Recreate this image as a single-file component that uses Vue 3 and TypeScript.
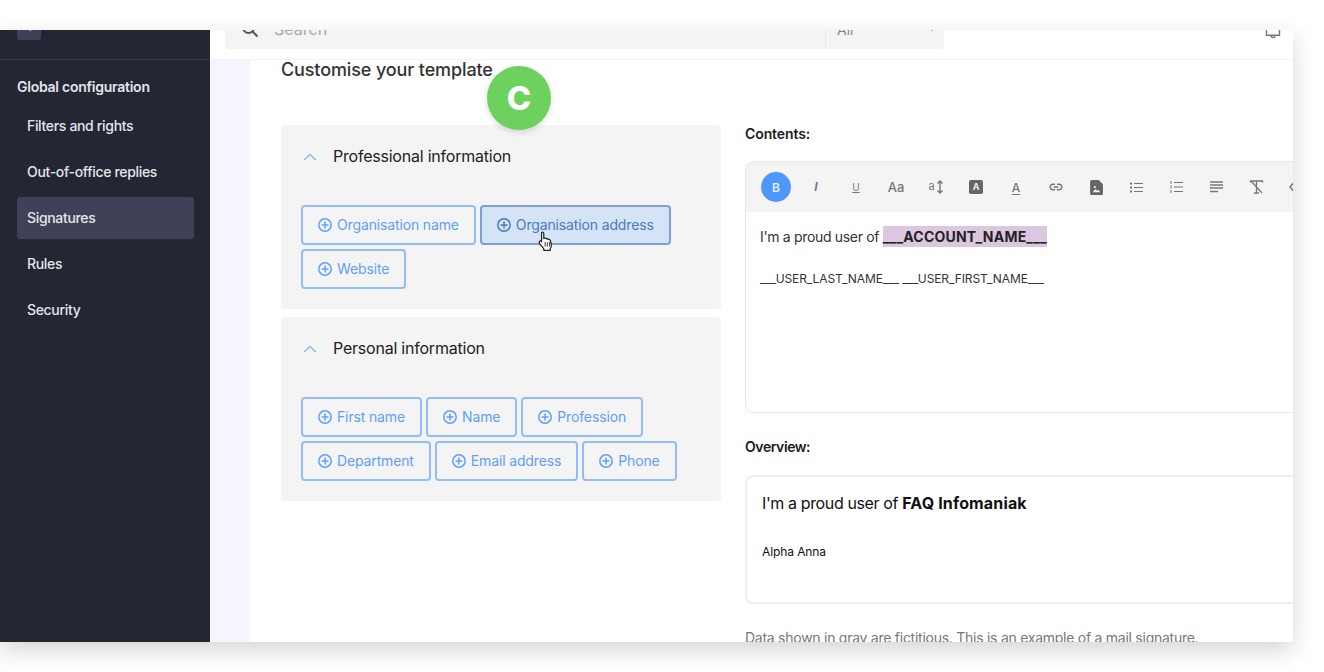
<script setup lang="ts">
interface Card {
  title: string
  items: string[]
}
const nav: string[] = ['Filters and rights', 'Out-of-office replies', 'Signatures', 'Rules', 'Security']
const cards: Card[] = [
  { title: 'Professional information', items: ['Organisation name', 'Organisation address', 'Website'] },
  { title: 'Personal information', items: ['First name', 'Name', 'Profession', 'Department', 'Email address', 'Phone'] },
]
</script>

<template>
  <div class="page">
    <div class="window">
      <aside class="sidebar">
        <div class="side-top">
          <div class="back">
            <svg width="12" height="12" viewBox="0 0 12 12" fill="none" stroke="#9a9cb0" stroke-width="1.5"><path d="M8 2 4 6l4 4" /></svg>
          </div>
        </div>
        <div class="side-title">Global configuration</div>
        <nav class="nav">
          <div v-for="n in nav" :key="n" class="nav-item" :class="{ active: n === 'Signatures' }">{{ n }}</div>
        </nav>
      </aside>

      <div class="main">
        <header class="header">
          <div class="search">
            <svg class="search-icon" width="18" height="18" viewBox="0 0 18 18" fill="none" stroke="#555" stroke-width="2"><circle cx="7.5" cy="7.5" r="5.5" /><path d="m11.5 11.5 5 5" /></svg>
            <span class="search-text">Search</span>
            <div class="search-select">
              <span>All</span>
              <svg width="6" height="4" viewBox="0 0 6 4" fill="#666"><path d="M0 0h6L3 4z" /></svg>
            </div>
          </div>
          <svg class="bell" width="18" height="26" viewBox="0 0 18 26" fill="none" stroke="#777" stroke-width="1.4"><path d="M2.500 10c0-4 2.500-7 6.500-7s6.500 3 6.500 7v10.200h-13z" /><path d="M7 20.500c0 2.600 4 2.600 4 0" /></svg>
        </header>

        <div class="body">
          <div class="strip"></div>
          <section class="panel">
            <h1 class="title">Customise your template</h1>
            <div class="badge">C</div>
            <div class="columns">
              <div class="left">
                <div v-for="card in cards" :key="card.title" class="card">
                  <div class="card-head">
                    <svg width="14" height="8" viewBox="0 0 14 8" fill="none" stroke="#8db8f5" stroke-width="1.4"><path d="M1 7 7 1.500 13 7" /></svg>
                    <span>{{ card.title }}</span>
                  </div>
                  <div class="chips">
                    <div v-for="it in card.items" :key="it" class="chip" :class="{ hover: it === 'Organisation address' }">
                      <svg width="14" height="14" viewBox="0 0 14 14" fill="none" stroke="currentColor" stroke-width="1.500"><circle cx="7" cy="7" r="6.200" /><path d="M7 3.500v7M3.500 7h7" /></svg>
                      <span>{{ it }}</span>
                      <svg v-if="it === 'Organisation address'" class="cursor" width="18" height="21" viewBox="0 0 16 19"><path d="M4 1.500c.8-.8 2-.4 2 .8V7l.6-.4c.8-.3 1.500.1 1.700.5.700-.3 1.500 0 1.800.6.700-.3 1.600.1 1.800.8l.9 3.500c.3 1.500-.2 3-1 4v1.500H6V16L2.500 11.800C1.800 11 1.500 10 2.200 9.300c.5-.5 1.200-.3 1.800.2z" fill="#fff" stroke="#222" stroke-width="1.100" stroke-linejoin="round" /><path d="M7.200 10v4M9.200 10v4M11.200 10v4" stroke="#222" stroke-width=".8" /></svg>
                    </div>
                  </div>
                </div>
              </div>

              <div class="right">
                <div class="label">Contents:</div>
                <div class="editor">
                  <div class="toolbar">
                    <div class="tool bold">B</div>
                    <div class="tool italic">I</div>
                    <div class="tool under">U</div>
                    <div class="tool aa">Aa</div>
                    <div class="tool size"><small>a</small><svg width="8" height="14" viewBox="0 0 8 14" fill="none" stroke="#777" stroke-width="1.400"><path d="M4 1v12M1.500 3.500 4 1l2.500 2.500M1.500 10.500 4 13l2.500-2.500" /></svg></div>
                    <div class="tool"><span class="boxa">A</span></div>
                    <div class="tool linea">A</div>
                    <div class="tool"><svg width="14" height="8" viewBox="0 0 14 8" fill="none" stroke="#777" stroke-width="1.400"><path d="M6 1.200H4a2.800 2.800 0 0 0 0 5.600h2M8 1.200h2a2.800 2.800 0 0 1 0 5.600H8M4.500 4h5" /></svg></div>
                    <div class="tool"><svg width="13" height="15" viewBox="0 0 12 14"><path d="M1.500 0H8l4 4v8.500a1.500 1.500 0 0 1-1.500 1.500h-9A1.500 1.500 0 0 1 0 12.500v-11A1.500 1.500 0 0 1 1.500 0z" fill="#666" /><path d="m2.500 11.500 2.500-3 1.500 1.500 1-1 2 2.500z" fill="#f4f4f4" /><circle cx="4.500" cy="6.500" r="1" fill="#f4f4f4" /></svg></div>
                    <div class="tool"><svg width="13" height="11" viewBox="0 0 13 11" fill="none" stroke="#777" stroke-width="1.200"><path d="M4 1.500h9M4 5.500h9M4 9.500h9" /><path d="M0 1.500h2M0 5.500h2M0 9.500h2" stroke-width="2" /></svg></div>
                    <div class="tool"><svg width="13" height="12" viewBox="0 0 13 12" fill="none" stroke="#777" stroke-width="1.200"><path d="M4 1.500h9M4 6h9M4 10.500h9" /><path d="M1 0v3M1 4.500v3M1 9v3" stroke-width="1" /></svg></div>
                    <div class="tool"><svg width="13" height="12" viewBox="0 0 13 12" fill="none" stroke="#777" stroke-width="1.400"><path d="M0 1h13M0 4h13M0 7h13M0 10.500h8" /></svg></div>
                    <div class="tool"><svg width="15" height="14" viewBox="0 0 15 14" fill="none" stroke="#777" stroke-width="1.300"><path d="M1.500 2.500V1h12v1.500M7.500 1v12M5 13h5M2 1l11 12" /></svg></div>
                    <div class="tool"><svg width="14" height="10" viewBox="0 0 14 10" fill="none" stroke="#777" stroke-width="1.500"><path d="M4.500 1 1 5l3.500 4M9.500 1 13 5l-3.500 4" /></svg></div>
                  </div>
                  <div class="editor-body">
                    <p class="line-a">I'm a proud user of <b class="mark">___ACCOUNT_NAME___</b></p>
                    <p class="line-b">___USER_LAST_NAME___ ___USER_FIRST_NAME___</p>
                  </div>
                </div>

                <div class="label overview">Overview:</div>
                <div class="preview">
                  <p class="prev-a">I'm a proud user of <b>FAQ Infomaniak</b></p>
                  <p class="prev-b">Alpha Anna</p>
                </div>
                <p class="note">Data shown in gray are fictitious. This is an example of a mail signature.</p>
              </div>
            </div>
          </section>
        </div>
      </div>
    </div>
  </div>
</template>

<style>
html, body { margin: 0; background: #fff; overflow: hidden; }
</style>

<style scoped>
.page {
  width: 1324px;
  height: 672px;
  padding-top: 30px;
  box-sizing: border-box;
  background: #fff;
  font-family: Inter, "Liberation Sans", sans-serif;
}
.window {
  width: 1293px;
  height: 612px;
  display: flex;
  overflow: hidden;
  background: #fff;
  box-shadow: 0 8px 22px rgba(0, 0, 0, 0.17);
}
.sidebar {
  width: 210px;
  flex: none;
  background: #232633;
  color: #e4e5ea;
}
.side-top {
  height: 30px;
  border-bottom: 1px solid #363848;
  box-sizing: border-box;
  display: flex;
  align-items: flex-end;
  padding: 0 17px;
}
.back {
  width: 24px;
  height: 26px;
  margin-bottom: 19px;
  border-radius: 3px;
  background: #3e4057;
  display: flex;
  align-items: center;
  justify-content: center;
  flex: none;
}
.side-title {
  margin: 17px 0 0 17px;
  font-size: 14px;
  line-height: 20px;
  font-weight: 600;
  letter-spacing: -0.25px;
}
.nav {
  margin: 8px 16px 0 17px;
  display: flex;
  flex-direction: column;
  gap: 4px;
}
.nav-item {
  height: 42px;
  line-height: 42px;
  padding-left: 10px;
  font-size: 14px;
  font-weight: 500;
  border-radius: 3px;
  letter-spacing: -0.33px;
}
.nav-item.active { background: #3f4158; }
.main {
  flex: 1;
  min-width: 0;
  display: flex;
  flex-direction: column;
}
.header {
  height: 30px;
  flex: none;
  box-sizing: border-box;
  border-bottom: 1px solid #f4f4f4;
  display: flex;
  align-items: flex-end;
  justify-content: space-between;
  padding: 0 11px 0 15px;
}
.search {
  width: 719px;
  height: 40px;
  flex: none;
  margin-bottom: 10px;
  background: #f4f4f4;
  border-radius: 4px;
  display: flex;
  align-items: center;
  padding-left: 16px;
  box-sizing: border-box;
}
.search-text {
  margin-left: 15px;
  flex: 1;
  color: #a3a8ba;
  font-size: 16px;
}
.search-select {
  width: 119px;
  height: 100%;
  box-sizing: border-box;
  border-left: 1px solid #e6e6e6;
  display: flex;
  align-items: center;
  justify-content: space-between;
  padding: 0 9px 0 11px;
  font-size: 14px;
  color: #888;
}
.bell { margin-bottom: 18px; flex: none; }
.body {
  flex: 1;
  min-height: 0;
  display: flex;
}
.strip {
  width: 40px;
  flex: none;
  background: #f4f5fd;
}
.panel {
  flex: 1;
  min-width: 0;
  padding-left: 31px;
  position: relative;
  overflow: hidden;
  background: #fff;
}
.title {
  margin: 0 0 45px;
  font-size: 18px;
  line-height: 20px;
  font-weight: 500;
  color: #333;
  letter-spacing: -0.12px;
}
.badge {
  position: absolute;
  left: 237px;
  top: 6px;
  width: 64px;
  height: 64px;
  border-radius: 50%;
  background: #6dd15d;
  color: #fff;
  font-size: 33px;
  font-weight: 800;
  line-height: 64px;
  text-align: center;
  box-shadow: 0 2px 6px rgba(0, 0, 0, 0.15);
}
.columns {
  display: grid;
  grid-template-columns: 440px 700px;
  column-gap: 24px;
}
.left {
  display: flex;
  flex-direction: column;
  gap: 8px;
}
.card {
  height: 184px;
  box-sizing: border-box;
  padding: 0 20px;
  background: #f4f4f4;
  border-radius: 4px;
}
.card-head {
  height: 80px;
  box-sizing: border-box;
  padding: 21px 0 0 2px;
  display: flex;
  align-items: flex-start;
  font-size: 16px;
  line-height: 20px;
  color: #222;
  letter-spacing: -0.22px;
}
.card-head svg { margin: 7px 16px 0 0; flex: none; }
.chips {
  display: flex;
  flex-wrap: wrap;
  gap: 4px;
}
.chip {
  position: relative;
  height: 40px;
  box-sizing: border-box;
  padding: 0 15px 1px;
  display: flex;
  align-items: center;
  gap: 5px;
  border: 2px solid #93bdfa;
  border-radius: 4px;
  color: #5f9ffb;
  font-size: 14px;
  letter-spacing: -0.14px;
}
.chip svg { flex: none; }
.chip.hover {
  background: #d5e3f6;
  border-color: #7f9fd2;
  color: #4c7cbd;
}
.chip .cursor {
  position: absolute;
  left: 55px;
  top: 24px;
}
.label {
  height: 18px;
  font-size: 14px;
  line-height: 18px;
  font-weight: 600;
  color: #1c1c1c;
  margin-bottom: 18px;
  letter-spacing: -0.1px;
}
.editor {
  height: 252px;
  box-sizing: border-box;
  border: 1px solid #e8e8e8;
  border-radius: 8px;
  overflow: hidden;
}
.toolbar {
  height: 50px;
  background: #f4f4f4;
  display: flex;
  align-items: center;
  gap: 10px;
  padding-left: 15px;
}
.tool {
  width: 30px;
  height: 30px;
  flex: none;
  display: flex;
  align-items: center;
  justify-content: center;
  color: #777;
  font-size: 12px;
  gap: 1px;
}
.tool.bold {
  background: #4e97fd;
  border-radius: 50%;
  color: #e8f1ff;
  font-weight: 600;
}
.tool.italic { font-style: italic; font-weight: 600; font-family: "Liberation Sans", sans-serif; }
.tool.under { text-decoration: underline; font-size: 10px; }
.tool.aa { font-size: 13px; font-weight: 500; }
.tool.size small { font-size: 11px; margin-bottom: 3px; }
.boxa {
  width: 14px;
  height: 14px;
  background: #666;
  border-radius: 2px;
  color: #eee;
  font-size: 9px;
  font-weight: 700;
  line-height: 14px;
  text-align: center;
}
.tool.linea {
  font-size: 12px;
  font-weight: 500;
  line-height: 11px;
  text-decoration: underline;
  text-underline-offset: 2px;
}
.editor-body { padding: 14px 0 0 14px; color: #333; }
.editor-body p { margin: 0; }
.line-a {
  font-size: 14px;
  line-height: 21px;
  letter-spacing: -0.33px;
}
.mark {
  display: inline-block;
  background: #dcc6e0;
  font-weight: 700;
  color: #222;
  letter-spacing: 0.2px;
}
.line-b {
  margin-top: 22px !important;
  font-size: 12px;
  line-height: 20px;
  letter-spacing: -0.1px;
}
.overview { margin-top: 25px; margin-bottom: 19px; letter-spacing: -0.42px; }
.preview {
  height: 129px;
  box-sizing: border-box;
  border: 2px solid #eeeeee;
  border-radius: 8px;
  padding: 16px 0 0 15px;
  color: #111;
}
.preview p { margin: 0; }
.prev-a {
  font-size: 16px;
  line-height: 20px;
  letter-spacing: -0.38px;
}
.prev-a b { letter-spacing: 0.15px; }
.prev-b {
  margin-top: 29px !important;
  font-size: 12px;
  line-height: 20px;
  letter-spacing: -0.1px;
}
.note {
  margin: 24px 0 0;
  font-size: 14px;
  line-height: 20px;
  color: #777;
  white-space: nowrap;
  letter-spacing: -0.26px;
}
</style>
